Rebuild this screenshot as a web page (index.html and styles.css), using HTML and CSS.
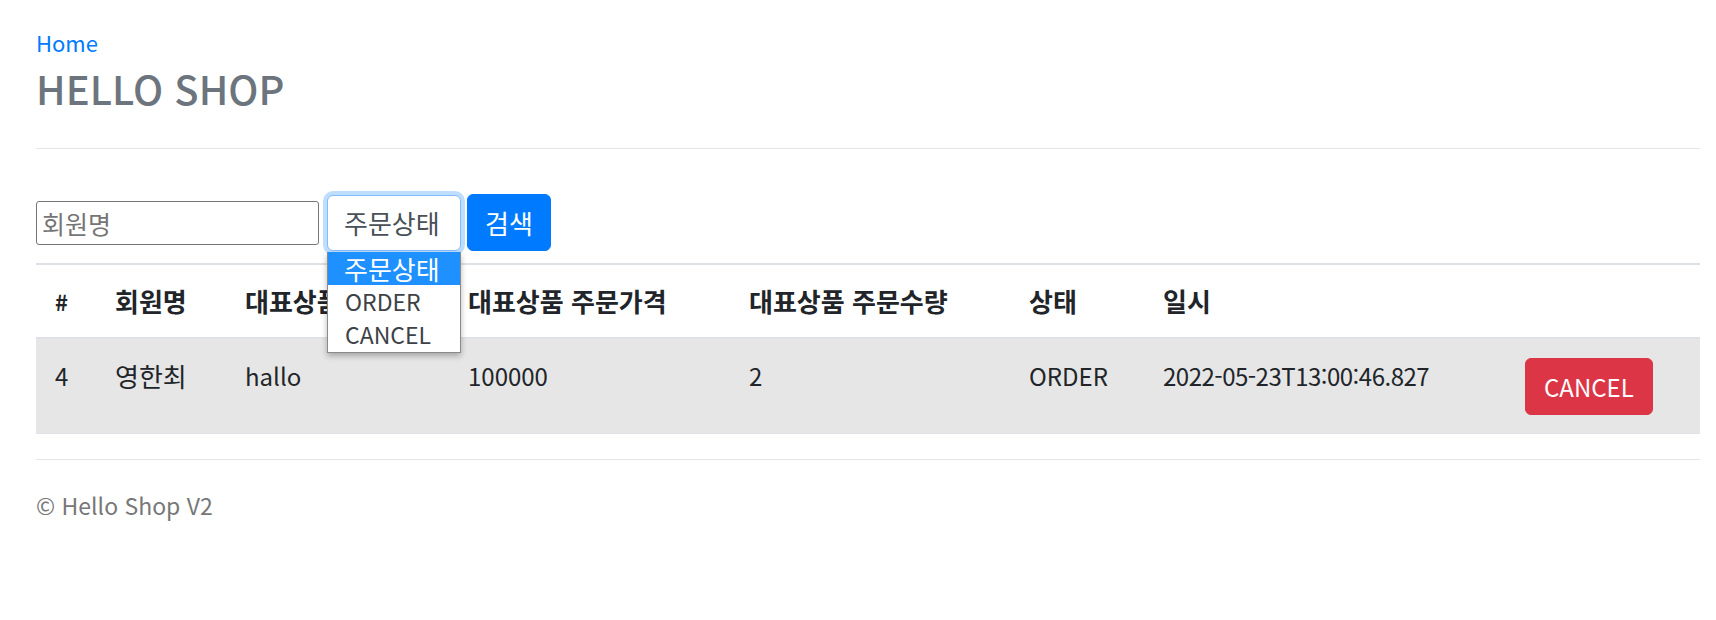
FILE: index.html
```html
<!DOCTYPE html>
<html lang="ko">
<head>
<meta charset="utf-8">
<title>HELLO SHOP</title>
<link rel="stylesheet" href="styles.css">
</head>
<body>
<div class="container">
  <div class="header">
    <a class="nav-link" href="#">Home</a>
    <h3 class="brand">HELLO SHOP</h3>
  </div>
  <div class="content">
    <form class="search">
      <input class="name-input" type="text" placeholder="회원명">
      <div class="select-wrap">
        <div class="select">주문상태</div>
        <ul class="dropdown">
          <li class="option active">주문상태</li>
          <li class="option">ORDER</li>
          <li class="option">CANCEL</li>
        </ul>
      </div>
      <button class="btn btn-primary ko" type="button">검색</button>
    </form>
    <table class="orders">
      <colgroup>
        <col class="c1"><col class="c2"><col class="c3"><col class="c4">
        <col class="c5"><col class="c6"><col class="c7"><col class="c8">
      </colgroup>
      <thead>
        <tr>
          <th class="latin">#</th>
          <th>회원명</th>
          <th>대표상품명</th>
          <th>대표상품 주문가격</th>
          <th>대표상품 주문수량</th>
          <th>상태</th>
          <th>일시</th>
          <th></th>
        </tr>
      </thead>
      <tbody>
        <tr>
          <td>4</td>
          <td class="ko">영한최</td>
          <td>hallo</td>
          <td>100000</td>
          <td>2</td>
          <td>ORDER</td>
          <td class="date">2022-05-23T13:00:46.827</td>
          <td class="action"><button class="btn btn-danger" type="button">CANCEL</button></td>
        </tr>
      </tbody>
    </table>
  </div>
  <div class="footer">© Hello Shop V2</div>
</div>
</body>
</html>
```

FILE: styles.css
```css
* { box-sizing: border-box; }

html, body {
  margin: 0;
  padding: 0;
  background: #ffffff;
}

body {
  font-family: "Noto Sans CJK KR", "Noto Sans", sans-serif;
  color: #212529;
  font-size: 24px;
}

.container {
  padding: 0 16px 0 36px;
}

.header {
  padding-top: 27px;
  padding-bottom: 35px;
  border-bottom: 1px solid #e5e5e5;
}

.nav-link {
  display: block;
  font-size: 22px;
  line-height: 30px;
  color: #007bff;
  text-decoration: none;
}

.brand {
  margin: 6px 0 0;
  font-size: 40px;
  line-height: 50px;
  font-weight: 500;
  color: #6c757d;
}

.search {
  margin: 45px 0 0;
  height: 57px;
  display: flex;
  align-items: center;
}

.name-input {
  width: 283px;
  height: 44px;
  margin: 0 8px 0 0;
  padding: 0 5px;
  border: 1px solid #767676;
  border-radius: 3px;
  font-family: inherit;
  font-size: 25px;
  color: #212529;
  background: #fff;
}

.name-input::placeholder {
  color: #757575;
}

.select-wrap {
  position: relative;
  margin-right: 6px;
}

.select {
  width: 134px;
  height: 56px;
  padding: 0 16px;
  display: flex;
  align-items: center;
  border: 1px solid #80bdff;
  border-radius: 6px;
  box-shadow: 0 0 0 4px rgba(0, 123, 255, 0.25);
  background: #fff;
  color: #495057;
  font-size: 26px;
  white-space: nowrap;
}

.dropdown {
  position: absolute;
  left: 0;
  top: 57px;
  width: 134px;
  margin: 0;
  padding: 0;
  list-style: none;
  background: #fff;
  border: 1px solid #8a8a8a;
  border-top: 0;
  box-shadow: 0 3px 6px rgba(0, 0, 0, 0.28);
  z-index: 10;
}

.option {
  height: 33.4px;
  line-height: 33px;
  padding-left: 17px;
  font-size: 23px;
  color: #3d4247;
  white-space: nowrap;
}

.option.active {
  background: #1e90ff;
  color: #fff;
  font-size: 26px;
  padding-left: 16px;
}

.btn {
  display: inline-block;
  height: 57px;
  padding: 0 18px;
  border: 1px solid transparent;
  border-radius: 6px;
  font-family: inherit;
  font-size: 24px;
  line-height: 36px;
  color: #fff;
  cursor: pointer;
}

.btn.ko {
  font-size: 26px;
  padding: 0 17px;
}

.btn-primary {
  background: #007bff;
  border-color: #007bff;
}

.btn-danger {
  background: #dc3545;
  border-color: #dc3545;
}

.orders {
  margin-top: 12px;
  width: 1664px;
  table-layout: fixed;
  border-collapse: separate;
  border-spacing: 0;
}

.c1 { width: 61px; }
.c2 { width: 130px; }
.c3 { width: 223px; }
.c4 { width: 281px; }
.c5 { width: 280px; }
.c6 { width: 134px; }
.c7 { width: 362px; }
.c8 { width: 193px; }

.orders th {
  text-align: left;
  font-weight: 700;
  font-size: 26px;
  line-height: 36px;
  padding: 18px 18px 18px;
  border-top: 2px solid #dee2e6;
  border-bottom: 2px solid #dee2e6;
  white-space: nowrap;
  vertical-align: top;
}

.orders th.latin {
  font-size: 22px;
}

.orders th:first-child,
.orders td:first-child {
  padding-left: 19px;
}

.orders td {
  background: #e6e6e6;
  font-size: 24px;
  line-height: 36px;
  padding: 19px 18px 39px;
  border-bottom: 1px solid #dee2e6;
  vertical-align: top;
  white-space: nowrap;
}

.orders td.ko {
  font-size: 26px;
}

.orders td.date {
  letter-spacing: -0.5px;
}

.orders td.action {
  padding: 19px 18px 18px;
}

.footer {
  margin-top: 25px;
  border-top: 1px solid #e5e5e5;
  padding-top: 27px;
  font-size: 23px;
  line-height: 36px;
  color: #777;
}
```
